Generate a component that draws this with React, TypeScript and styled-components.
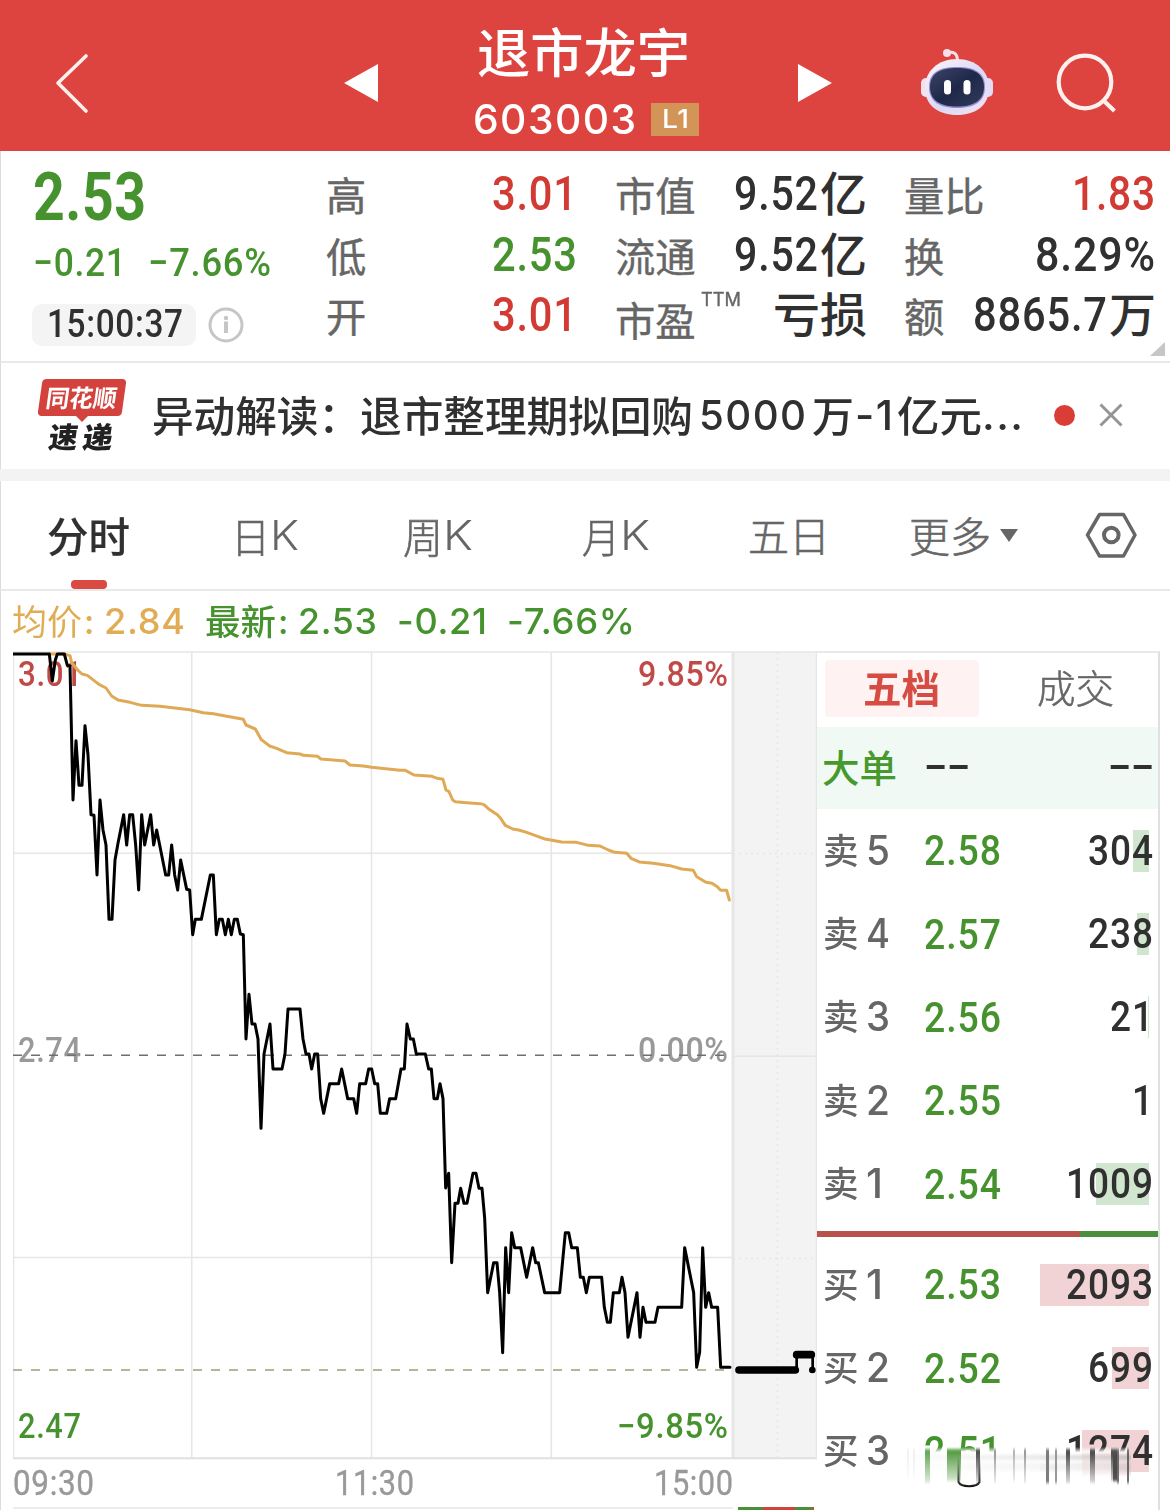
import React, { useLayoutEffect, useRef, useState } from 'react';
import styled, { createGlobalStyle } from 'styled-components';

const DIN = 'Roboto, "Noto Sans CJK SC", sans-serif';
const SF = 'Inter, "Noto Sans CJK SC", sans-serif';
const CJK = '"Noto Sans CJK SC", sans-serif';

const RED = '#d13b33';
const GREEN = '#46922f';
const INK = '#303030';
const GREY = '#666666';
const LINE = '#e9e9e9';

const Global = createGlobalStyle`
  * { box-sizing: border-box; }
  html, body { margin: 0; padding: 0; background: #fff; }
  svg { display: block; }
`;

/* Text squeezed or stretched to an exact advance width. */
const FitBox = styled.span<{ $w: number }>`
  display: inline-block;
  flex: none;
  width: ${(p) => p.$w}px;
  white-space: pre;
  text-align: left;
`;
const FitText = styled.span`
  display: inline-block;
  transform-origin: 0 50%;
`;
function Fit({ w, children }: { w: number; children: React.ReactNode }) {
  const ref = useRef<HTMLSpanElement>(null);
  const [scale, setScale] = useState(1);
  useLayoutEffect(() => {
    if (ref.current && ref.current.offsetWidth) {
      const cs = getComputedStyle(ref.current);
      const width = parseFloat(cs.width) || ref.current.offsetWidth;
      const trailing = parseFloat(cs.letterSpacing) || 0;
      setScale(w / (width - trailing));
    }
  }, [w]);
  return (
    <FitBox $w={w}>
      <FitText ref={ref} style={{ transform: `scaleX(${scale})` }}>{children}</FitText>
    </FitBox>
  );
}

const Screen = styled.div`
  width: 1170px;
  height: 1510px;
  overflow: hidden;
  background: #fff;
  display: flex;
  flex-direction: column;
`;

/* ---------- header ---------- */
const Header = styled.header`
  height: 151px;
  flex: none;
  background: #dd443f;
  display: grid;
  grid-template-columns: 344px 34px 420px 34px 88px 112px 100px;
`;
const HeadCell = styled.div<{ $left?: number; $top: number }>`
  padding: ${(p) => p.$top}px 0 0 ${(p) => p.$left ?? 0}px;
`;
const TitleCell = styled.div`
  display: flex;
  flex-direction: column;
  padding: 22px 0 0 94px;
  color: #fff;
`;
const StockName = styled.div`
  height: 56px;
  padding-left: 5px;
  font: 500 53px/56px ${CJK};
`;
const CodeRow = styled.div`
  display: flex;
  align-items: center;
  gap: 15px;
  height: 48px;
  margin-top: 17px;
  padding-left: 1px;
  font: 500 41.500px/48px ${SF};
  letter-spacing: 0.035em;
`;
const LevelTag = styled.span`
  width: 48px;
  height: 33px;
  display: flex;
  justify-content: center;
  background: #d39557;
  font: 500 26px/32px ${SF};
  letter-spacing: 0.02em;
`;

function Robot() {
  return (
    <svg width="76" height="70" viewBox="919 47 76 70">
      <defs>
        <linearGradient id="shell" x1="0" y1="0" x2="1" y2="1">
          <stop offset="0" stopColor="#fff6f8" />
          <stop offset=".55" stopColor="#dcd8f6" />
          <stop offset="1" stopColor="#f3e4f1" />
        </linearGradient>
        <linearGradient id="visor" x1="0" y1="0" x2="1" y2="1">
          <stop offset="0" stopColor="#3b4468" />
          <stop offset=".5" stopColor="#20284a" />
          <stop offset="1" stopColor="#323b5c" />
        </linearGradient>
      </defs>
      <path d="M947 53 C953 51 957 53 957.5 60" fill="none" stroke="#f6dfe8" strokeWidth="3" />
      <circle cx="947" cy="53" r="4" fill="#f3dfee" />
      <rect x="921" y="78" width="10" height="19" rx="5" fill="#f2e2f0" />
      <rect x="983" y="78" width="10" height="19" rx="5" fill="#e4dcf6" />
      <path d="M957 59 C976 59 989 71 989 88 C989 106 975 115 957 115 C939 115 925 106 925 88 C925 71 938 59 957 59Z" fill="url(#shell)" />
      <path d="M957 67 C974 67 985 72 985 87 C985 102 974 108 957 108 C940 108 929 102 929 87 C929 72 940 67 957 67Z" fill="#8b8fd0" />
      <path d="M957 68 C973 68 984 73 984 87 C984 101 973 106.500 957 106.500 C941 106.500 930 101 930 87 C930 73 941 68 957 68Z" fill="url(#visor)" />
      <rect x="944" y="80" width="7" height="14.500" rx="3.500" fill="#fff" />
      <rect x="963.500" y="80" width="7" height="14.500" rx="3.500" fill="#fff" />
    </svg>
  );
}

/* ---------- quote ---------- */
const Quote = styled.section`
  height: 212px;
  flex: none;
  display: flex;
  border-left: 1px solid #dcdcdc;
  border-bottom: 2px solid ${LINE};
`;
const Summary = styled.div`
  width: 325px;
  padding: 12px 0 0 31px;
`;
const LastPrice = styled.div`
  height: 70px;
  padding-left: 1px;
  color: ${GREEN};
  font: 700 66px/70px ${DIN};
  letter-spacing: 0.01em;
`;
const Change = styled.div`
  display: flex;
  gap: 22px;
  height: 44px;
  margin-top: 7px;
  padding-left: 1px;
  color: ${GREEN};
  font: 500 39.500px/46px ${DIN};
  letter-spacing: 0.02em;
`;
const TimeRow = styled.div`
  display: flex;
  align-items: center;
  gap: 12px;
  margin-top: 20px;
`;
const TimePill = styled.div`
  width: 164px;
  height: 42px;
  padding-left: 15px;
  border-radius: 10px;
  background: #f4f4f4;
  color: ${INK};
  font: 500 38px/41px ${DIN};
  letter-spacing: 0.02em;
`;
const Stats = styled.div`
  display: flex;
  gap: 38px;
  padding-top: 13px;
`;
const StatCol = styled.div`
  width: 251px;
`;
const Stat = styled.div`
  height: 60.500px;
  display: flex;
  align-items: center;
  justify-content: space-between;
`;
const StatLabel = styled.span<{ $drop?: boolean }>`
  display: flex;
  padding-top: ${(p) => (p.$drop ? 8 : 0)}px;
  color: ${GREY};
  font: 400 40.300px/48px ${CJK};
  -webkit-text-stroke: 0.4px ${GREY};
`;
const Ttm = styled.sup`
  margin: -25px 0 0 5px;
  font: 400 19px/60px ${SF};
  vertical-align: baseline;
`;
const StatValue = styled.span<{ $color?: string }>`
  display: flex;
  align-items: center;
  color: ${(p) => p.$color ?? INK};
  font: 500 48px/56px ${DIN};
  letter-spacing: 0.02em;
`;
const Unit = styled.span`
  font: 500 47px/50px ${DIN};
  letter-spacing: 0;
  margin: 2px -1px 0 2px;
`;
const CornerCell = styled.div`
  align-self: flex-end;
  padding: 0 0 5px;
  margin-left: -5px;
`;

/* ---------- notice ---------- */
const Notice = styled.section`
  height: 106px;
  flex: none;
  display: flex;
  border-left: 1px solid #dcdcdc;
`;
const Brand = styled.div`
  width: 151px;
  padding: 16px 0 0 39px;
`;
const BrandTop = styled.div`
  width: 84px;
  height: 37px;
  padding-left: 6px;
  border-radius: 4px;
  background: #d3423c;
  transform: skewX(-8deg);
  color: #fff;
  font: 700 24px/35px ${CJK};
`;
const BrandTip = styled.div`
  width: 0;
  height: 0;
  margin-left: 36px;
  border: solid transparent;
  border-width: 6px 6px 0;
  border-top-color: #d3423c;
`;
const BrandBottom = styled.div`
  height: 30px;
  padding-left: 9px;
  display: flex;
  gap: 5px;
  transform: skewX(-8deg);
  color: #222;
  font: 900 29px/26px ${CJK};
`;
const NoticeText = styled.div`
  width: 903px;
  display: flex;
  padding-top: 26px;
  color: ${INK};
  font: 500 41.600px/50px ${CJK};
`;
const NoticeNum = styled.span<{ $l?: number; $r?: number }>`
  margin: 0 ${(p) => p.$r ?? 0}px 0 ${(p) => p.$l ?? 0}px;
  font: 500 41.500px/52px ${SF};
  letter-spacing: 0.035em;
`;
const Dot = styled.span`
  width: 21px;
  height: 21px;
  margin: 42px 0 0 -1px;
  border-radius: 50%;
  background: #da3d36;
`;
const CloseCell = styled.div`
  padding: 40px 0 0 24px;
`;
const Band = styled.div`
  height: 12px;
  flex: none;
  background: #f3f3f3;
`;

/* ---------- tabs ---------- */
const Tabs = styled.nav`
  height: 110px;
  flex: none;
  display: grid;
  grid-template-columns: 184px 172px 179px 166px 161px 176px 1fr;
  padding-left: 46px;
  border-left: 1px solid #dcdcdc;
  border-bottom: 2px solid ${LINE};
`;
const Tab = styled.div<{ $on?: boolean }>`
  display: flex;
  flex-direction: column;
  padding-top: 27px;
  color: ${(p) => (p.$on ? INK : GREY)};
  font: ${(p) => (p.$on ? 500 : 300)} 41px/52px ${CJK};
  -webkit-text-stroke: ${(p) => (p.$on ? 0.2 : 0.6)}px currentColor;
`;
const TabLine = styled.span`
  display: flex;
  align-items: center;
`;
const Latin = styled.span`
  margin-top: 1px;
  font: 300 41.500px/52px ${SF};
  -webkit-text-stroke: 0;
`;
const Marker = styled.span`
  width: 36px;
  height: 9px;
  margin: 20px 0 0 24px;
  border-radius: 4px;
  background: #d94b42;
`;
const Caret = styled.span`
  margin: 2px 0 0 9px;
  border: solid transparent;
  border-width: 13px 9px 0;
  border-top-color: ${GREY};
`;

/* ---------- legend ---------- */
const Legend = styled.div`
  height: 60px;
  flex: none;
  display: flex;
  padding-left: 11px;
  border-left: 1px solid #dcdcdc;
  font: 500 36px/61px ${SF};
  letter-spacing: 0.02em;
`;
const LegendItem = styled.span<{ $color: string; $gap?: number }>`
  display: flex;
  margin-right: ${(p) => p.$gap ?? 0}px;
  color: ${(p) => p.$color};
`;
const LegendLabel = styled.span<{ $weight: number }>`
  font: ${(p) => p.$weight} 35px/58px ${CJK};
  letter-spacing: 0;
`;
const Colon = styled.span`
  width: 22px;
  font-size: 34px;
  text-indent: 2px;
`;

/* ---------- chart ---------- */
const Main = styled.main`
  flex: 1;
  display: flex;
  border-left: 1px solid #dcdcdc;
`;
const ChartCol = styled.div`
  width: 816px;
  padding-left: 12px;
`;
const Plot = styled.div`
  position: relative;
  height: 809px;
  width: 804px;
`;
const PlotLabel = styled.span<{ $y: number; $color: string; $right?: boolean }>`
  position: absolute;
  top: ${(p) => p.$y}px;
  ${(p) => (p.$right ? 'right: 89px;' : 'left: 5px;')}
  height: 40px;
  color: ${(p) => p.$color};
  font: 500 34.500px/40px ${DIN};
  letter-spacing: 0.02em;
`;
const PlotSvg = styled.svg`
  position: relative;
`;
const Axis = styled.div`
  height: 47px;
  display: flex;
  justify-content: space-between;
  width: 720px;
  color: #999;
  font: 400 34.500px/46px ${DIN};
  letter-spacing: 0.02em;
  -webkit-text-stroke: 0.4px #999;
`;
const Strip = styled.div`
  display: flex;
  height: 3px;
  padding-left: 725px;
  background: linear-gradient(#ececec, #ececec) 0 0 / 720px 2px no-repeat;
`;
const StripPart = styled.span<{ $w: number; $color: string }>`
  width: ${(p) => p.$w}px;
  background: ${(p) => p.$color};
`;

const PRICE =
  '39,42 148,42 157,122 166,60 172,42 193,42 202,76 210,78 219,480 228,302 237,436 246,436 255,257 264,345 273,524 282,526 291,705 300,480 309,570 318,615 327,838 336,838 345,660 354,610 371,524 380,615 389,524 398,524 407,615 416,750 425,524 434,615 452,524 461,615 470,570 497,705 506,705 515,615 524,705 533,750 542,660 560,748 569,750 578,884 586,838 604,838 631,705 640,705 649,884 658,838 667,838 676,884 685,838 694,884 703,838 712,838 721,882 730,884 738,1197 747,1063 756,1152 765,1152 774,1197 783,1465 792,1242 810,1152 819,1287 846,1287 855,1242 864,1107 900,1107 909,1197 918,1242 927,1242 935,1287 944,1242 953,1242 962,1376 971,1420 989,1331 1016,1331 1025,1287 1043,1376 1061,1376 1070,1420 1079,1331 1097,1331 1106,1287 1115,1287 1124,1331 1133,1331 1141,1420 1160,1420 1169,1376 1187,1376 1203,1287 1213,1287 1221,1152 1231,1197 1240,1197 1249,1242 1276,1242 1286,1287 1294,1287 1302,1376 1312,1376 1320,1331 1329,1376 1337,1644 1346,1600 1355,1868 1365,1690 1374,1690 1382,1645 1392,1690 1401,1690 1419,1600 1428,1600 1437,1645 1446,1645 1454,1734 1463,1958 1481,1868 1491,1868 1499,1958 1508,2138 1517,1823 1526,1958 1535,1778 1544,1823 1562,1823 1580,1912 1598,1823 1607,1868 1615,1868 1634,1958 1679,1958 1696,1778 1706,1778 1715,1823 1732,1823 1741,1912 1750,1912 1759,1958 1768,1912 1805,1912 1813,2002 1822,2047 1831,2047 1840,1958 1858,1958 1866,1912 1875,1958 1884,2092 1911,1958 1920,2092 1929,2002 1938,2047 1965,2047 1974,2002 2045,2002 2054,1823 2063,1868 2081,1958 2090,2182 2099,2137 2108,1823 2117,2002 2126,1958 2135,2002 2153,2002 2162,2182 2190,2182';
const AVERAGE =
  '148,42 193,42 210,47 215,68 235,92 246,102 262,106 298,134 318,144 335,168 354,180 390,187 425,196 480,199 569,209 610,218 640,221 730,238 738,255 766,267 784,299 809,318 830,325 860,338 900,342 910,346 952,349 963,357 1035,363 1050,375 1090,378 1115,382 1200,391 1216,391 1242,405 1296,409 1312,415 1329,418 1338,450 1347,455 1358,480 1366,485 1400,488 1440,491 1452,494 1465,506 1492,524 1502,535 1516,556 1538,567 1556,570 1580,577 1615,590 1635,597 1685,606 1730,607 1765,616 1800,618 1825,630 1845,637 1880,640 1893,655 1918,666 1960,670 2010,677 2045,687 2080,691 2090,710 2118,727 2136,730 2152,740 2162,751 2180,751 2188,780';

function Chart() {
  return (
    <Plot>
      <PlotLabel $y={3} $color="#c04a48"><Fit w={64}>3.01</Fit></PlotLabel>
      <PlotLabel $y={3} $color="#c04a48" $right><Fit w={90}>9.85%</Fit></PlotLabel>
      <PlotLabel $y={379} $color="#999"><Fit w={63}>2.74</Fit></PlotLabel>
      <PlotLabel $y={379} $color="#999" $right><Fit w={90}>0.00%</Fit></PlotLabel>
      <PlotLabel $y={755} $color={GREEN}><Fit w={63}>2.47</Fit></PlotLabel>
      <PlotLabel $y={755} $color={GREEN} $right><Fit w={111}>−9.85%</Fit></PlotLabel>
      <PlotSvg width="804" height="809" viewBox="13 651 804 809">
        <rect x="733" y="652" width="83" height="806" fill="#f3f3f3" />
        <g stroke="#e6e6e6" strokeWidth="1.600" fill="none">
          <path d="M13 652H817M13.500 652V1458M191.700 652V1458M371.500 652V1458M551.300 652V1458M13 853.200H733M13 1257.500H733" />
          <path d="M733 652V1458" strokeWidth="3" />
          <path d="M13 1458.300H817" strokeWidth="2" stroke="#e0e0e0" />
          <path d="M733 1056.300H816" />
          <path d="M777.500 652V1458M733 853.500H816M733 1258.500H816" strokeDasharray="2 4" />
          <path d="M816.500 652V1458" />
        </g>
        <path d="M13 1055.300H733" stroke="#6f6f6f" strokeWidth="1.500" strokeDasharray="9 9" />
        <path d="M13 1370H733" stroke="#b5b59a" strokeWidth="1.800" strokeDasharray="9 9" />
        <g transform="translate(0 640) scale(.33333)" fill="none" strokeLinejoin="round" strokeLinecap="round">
          <polyline points={AVERAGE} stroke="#dfa956" strokeWidth="9" />
          <polyline points={PRICE} stroke="#000" strokeWidth="9" />
          <path d="M2390 2185V2145M2438 2145V2190" stroke="#000" strokeWidth="8" />
          <path d="M2217 2190H2386M2390 2144H2434" stroke="#000" strokeWidth="23" />
          <circle cx="2437" cy="2190" r="10" fill="#000" />
        </g>
      </PlotSvg>
    </Plot>
  );
}

/* ---------- order book ---------- */
const Book = styled.aside`
  width: 343px;
  border-top: 2px solid ${LINE};
  border-right: 2px solid #e0e0e0;
  position: relative;
`;
const BookTabs = styled.div`
  height: 74px;
  display: flex;
  gap: 58px;
  padding: 7px 0 0 8px;
`;
const BookTab = styled.div<{ $on?: boolean }>`
  width: ${(p) => (p.$on ? 154 : 80)}px;
  height: 57px;
  padding-left: ${(p) => (p.$on ? 38 : 0)}px;
  border-radius: 4px;
  background: ${(p) => (p.$on ? '#fef2f2' : 'none')};
  color: ${(p) => (p.$on ? '#d64c42' : GREY)};
  font: ${(p) => (p.$on ? 700 : 300)} 38.500px/53px ${CJK};
  -webkit-text-stroke: ${(p) => (p.$on ? 0 : 0.5)}px currentColor;
`;
const BigOrder = styled.div`
  height: 82px;
  display: flex;
  align-items: center;
  padding: 0 4px 0 5px;
  background: #f1f9f5;
`;
const BigLabel = styled.span`
  width: 102px;
  color: #46992c;
  font: 500 37.500px/78px ${CJK};
  margin-top: -4px;
`;
const Dashes = styled.span`
  color: ${INK};
  font: 500 42px/72px ${DIN};
  & + & { margin-left: auto; }
`;
const Rows = styled.div<{ $top?: number }>`
  padding-top: ${(p) => p.$top ?? 0}px;
`;
const Row = styled.div`
  height: 83.400px;
  display: flex;
  align-items: center;
  padding: 0 5px 0 6px;
`;
const Side = styled.span`
  width: 43px;
  color: ${GREY};
  font: 500 35.500px/50px ${CJK};
  margin-top: -4px;
`;
const Level = styled.span`
  width: 58px;
  color: ${GREY};
  font: 500 40.500px/50px ${SF};
`;
const Bid = styled.span`
  color: ${GREEN};
  font: 500 42.500px/51px ${DIN};
  letter-spacing: 0.025em;
`;
const Volume = styled.span<{ $bar: number; $tint: string }>`
  flex: 1;
  height: 42px;
  display: flex;
  justify-content: flex-end;
  background: linear-gradient(${(p) => p.$tint}, ${(p) => p.$tint}) right 4px top 0 / ${(p) => p.$bar}px 42px no-repeat;
  color: ${INK};
  font: 500 42.500px/42px ${DIN};
  letter-spacing: 0.025em;
`;
const Ratio = styled.div`
  height: 6px;
  margin-top: 5px;
  background: linear-gradient(90deg, #b8504c 263px, #4b8e3c 263px);
`;
const Smudge = styled.svg`
  position: absolute;
  left: 78px;
  top: 794px;
`;

const sells: [string, string, string, number][] = [
  ['5', '2.58', '304', 16],
  ['4', '2.57', '238', 12],
  ['3', '2.56', '21', 1],
  ['2', '2.55', '1', 0],
  ['1', '2.54', '1009', 53],
];
const buys: [string, string, string, number][] = [
  ['1', '2.53', '2093', 109],
  ['2', '2.52', '699', 37],
  ['3', '2.51', '1274', 67],
];

/* x, width, height and colour of each vertical streak */
const streaks: [number, number, number, string][] = [
  [30, 5, 34, '#4f9a3c'], [52, 14, 32, '#3f8f2c'], [81, 4, 34, '#333'],
  [99, 2, 34, '#888'], [118, 2, 32, '#aaa'], [129, 2, 34, '#888'], [151, 3, 34, '#666'],
  [160, 2, 34, '#888'], [171, 4, 34, '#333'], [195, 5, 34, '#333'], [216, 6, 32, '#333'],
  [222, 2, 34, '#555'], [232, 2, 34, '#555'], [12, 2, 28, '#eee'], [18, 2, 28, '#eee'],
];

function OrderRow({ side, row, tint }: { side: string; row: [string, string, string, number]; tint: string }) {
  return (
    <Row>
      <Side><Fit w={35.5}>{side}</Fit></Side>
      <Level><Fit w={row[0] === '1' ? 17 : 24}>{row[0]}</Fit></Level>
      <Bid><Fit w={77}>{row[1]}</Fit></Bid>
      <Volume $bar={row[3]} $tint={tint}><Fit w={row[2].length * 22 - 1}>{row[2]}</Fit></Volume>
    </Row>
  );
}

export default function App() {
  return (
    <Screen>
      <Global />
      <Header>
        <HeadCell $left={54} $top={51}>
          <svg width="38" height="64" viewBox="54 51 38 64">
            <path d="M86 56L58 83L86 111" fill="none" stroke="#fff0ee" strokeWidth="3.600" strokeLinecap="round" strokeLinejoin="round" />
          </svg>
        </HeadCell>
        <HeadCell $top={64}>
          <svg width="34" height="38" viewBox="0 0 34 38"><path d="M34 0V38L0 19Z" fill="#fff" /></svg>
        </HeadCell>
        <TitleCell>
          <StockName><Fit w={213}>退市龙宇</Fit></StockName>
          <CodeRow>
            <Fit w={163}>603003</Fit>
            <LevelTag><Fit w={27}>L1</Fit></LevelTag>
          </CodeRow>
        </TitleCell>
        <HeadCell $top={64}>
          <svg width="34" height="38" viewBox="0 0 34 38"><path d="M0 0V38L34 19Z" fill="#fff" /></svg>
        </HeadCell>
        <HeadCell $left={87} $top={47}><Robot /></HeadCell>
        <HeadCell $left={134} $top={50}>
          <svg width="64" height="66" viewBox="1054 50 64 66">
            <g fill="none" stroke="#fff0ee" strokeWidth="4.200">
              <circle cx="1085" cy="82" r="26.300" />
              <path d="M1104 101L1114.500 111" />
            </g>
          </svg>
        </HeadCell>
      </Header>

      <Quote>
        <Summary>
          <LastPrice><Fit w={113}>2.53</Fit></LastPrice>
          <Change>
            <Fit w={93}>−0.21</Fit>
            <Fit w={123}>−7.66%</Fit>
          </Change>
          <TimeRow>
            <TimePill><Fit w={136}>15:00:37</Fit></TimePill>
            <svg width="36" height="36" viewBox="0 0 36 36">
              <circle cx="18" cy="18" r="16" fill="none" stroke="#c6c6c6" strokeWidth="3" />
              <path d="M18 14.500V26" stroke="#c6c6c6" strokeWidth="4" />
              <circle cx="18" cy="11" r="2.200" fill="#c6c6c6" />
            </svg>
          </TimeRow>
        </Summary>
        <Stats>
          <StatCol>
            <Stat><StatLabel>高</StatLabel><StatValue $color={RED}><Fit w={85}>3.01</Fit></StatValue></Stat>
            <Stat><StatLabel>低</StatLabel><StatValue $color={GREEN}><Fit w={85}>2.53</Fit></StatValue></Stat>
            <Stat><StatLabel>开</StatLabel><StatValue $color={RED}><Fit w={85}>3.01</Fit></StatValue></Stat>
          </StatCol>
          <StatCol>
            <Stat><StatLabel>市值</StatLabel><StatValue><Fit w={84}>9.52</Fit><Unit>亿</Unit></StatValue></Stat>
            <Stat><StatLabel>流通</StatLabel><StatValue><Fit w={84}>9.52</Fit><Unit>亿</Unit></StatValue></Stat>
            <Stat>
              <StatLabel $drop>市盈<Ttm><Fit w={40}>TTM</Fit></Ttm></StatLabel>
              <StatValue><Unit>亏损</Unit></StatValue>
            </Stat>
          </StatCol>
          <StatCol>
            <Stat><StatLabel>量比</StatLabel><StatValue $color={RED}><Fit w={83}>1.83</Fit></StatValue></Stat>
            <Stat><StatLabel>换</StatLabel><StatValue><Fit w={120}>8.29%</Fit></StatValue></Stat>
            <Stat><StatLabel>额</StatLabel><StatValue><Fit w={134}>8865.7</Fit><Unit>万</Unit></StatValue></Stat>
          </StatCol>
        </Stats>
        <CornerCell>
          <svg width="15" height="14" viewBox="0 0 15 14"><path d="M15 0V14H0Z" fill="#c6c6c6" /></svg>
        </CornerCell>
      </Quote>

      <Notice>
        <Brand>
          <BrandTop><Fit w={71}>同花顺</Fit></BrandTop>
          <BrandTip />
          <BrandBottom><Fit w={29}>速</Fit><Fit w={30}>递</Fit></BrandBottom>
        </Brand>
        <NoticeText>
          <Fit w={541}>异动解读：退市整理期拟回购</Fit>
          <NoticeNum $l={6} $r={6}><Fit w={107}>5000</Fit></NoticeNum>
          <Fit w={42}>万</Fit>
          <NoticeNum $l={1} $r={4}><Fit w={38}>-1</Fit></NoticeNum>
          <Fit w={85}>亿元</Fit>
          <NoticeNum><Fit w={41}>...</Fit></NoticeNum>
        </NoticeText>
        <Dot />
        <CloseCell>
          <svg width="24" height="24" viewBox="0 0 24 24">
            <path d="M1.500 1.500L22.500 22.500M22.500 1.500L1.500 22.500" stroke="#959595" strokeWidth="3" />
          </svg>
        </CloseCell>
      </Notice>
      <Band />

      <Tabs>
        <Tab $on><Fit w={83}>分时</Fit><Marker /></Tab>
        <Tab><TabLine><Fit w={39}>日</Fit><Latin><Fit w={29}>K</Fit></Latin></TabLine></Tab>
        <Tab><TabLine><Fit w={40}>周</Fit><Latin><Fit w={30}>K</Fit></Latin></TabLine></Tab>
        <Tab><TabLine><Fit w={38}>月</Fit><Latin><Fit w={30}>K</Fit></Latin></TabLine></Tab>
        <Tab><Fit w={82}>五日</Fit></Tab>
        <Tab><TabLine><Fit w={82}>更多</Fit><Caret /></TabLine></Tab>
        <HeadCell $top={30}>
          <svg width="52" height="48" viewBox="1085 511 52 48">
            <g fill="none" stroke={GREY} strokeWidth="3.500" strokeLinejoin="round">
              <path d="M1099.500 514.500H1123.500L1135 535L1123.500 556H1099.500L1087.500 535Z" />
              <circle cx="1111.300" cy="535" r="7.300" strokeWidth="4" />
            </g>
          </svg>
        </HeadCell>
      </Tabs>

      <Legend>
        <LegendItem $color="#e0ad55" $gap={20}>
          <LegendLabel $weight={400}><Fit w={70}>均价</Fit></LegendLabel><Colon>:</Colon><Fit w={81}>2.84</Fit>
        </LegendItem>
        <LegendItem $color={GREEN} $gap={20}>
          <LegendLabel $weight={500}><Fit w={71}>最新</Fit></LegendLabel><Colon>:</Colon><Fit w={79}>2.53</Fit>
        </LegendItem>
        <LegendItem $color={GREEN} $gap={20}><Fit w={90}>-0.21</Fit></LegendItem>
        <LegendItem $color={GREEN}><Fit w={128}>-7.66%</Fit></LegendItem>
      </Legend>

      <Main>
        <ChartCol>
          <Chart />
          <Axis>
            <Fit w={81}>09:30</Fit>
            <Fit w={79}>11:30</Fit>
            <Fit w={79}>15:00</Fit>
          </Axis>
          <Strip>
            <StripPart $w={25} $color="#4b8e3c" />
            <StripPart $w={32} $color="#d0423c" />
            <StripPart $w={17} $color="#4b8e3c" />
            <StripPart $w={2} $color="#b0523c" />
          </Strip>
        </ChartCol>
        <Book>
          <BookTabs>
            <BookTab $on><Fit w={77}>五档</Fit></BookTab>
            <BookTab><Fit w={77}>成交</Fit></BookTab>
          </BookTabs>
          <BigOrder>
            <BigLabel><Fit w={75}>大单</Fit></BigLabel>
            <Dashes><Fit w={46}>––</Fit></Dashes>
            <Dashes><Fit w={46}>––</Fit></Dashes>
          </BigOrder>
          <Rows>
            {sells.map((r) => <OrderRow key={r[1]} side="卖" row={r} tint="#d0e6ce" />)}
          </Rows>
          <Ratio />
          <Rows $top={6}>
            {buys.map((r) => <OrderRow key={r[1]} side="买" row={r} tint="#f2d3d5" />)}
          </Rows>
          <Smudge width="250" height="50" viewBox="0 0 250 50">
            <defs>
              <linearGradient id="fade" x1="0" y1="0" x2="0" y2="1">
                <stop offset="0" stopColor="#fff" stopOpacity="0" />
                <stop offset=".12" stopColor="#fff" stopOpacity="1" />
                <stop offset="1" stopColor="#fff" stopOpacity="1" />
              </linearGradient>
              <linearGradient id="haze" x1="0" y1="0" x2="1" y2="0">
                <stop offset="0" stopColor="#ddd" stopOpacity="0" />
                <stop offset=".6" stopColor="#ddd" stopOpacity=".7" />
                <stop offset="1" stopColor="#c4bcbc" stopOpacity=".9" />
              </linearGradient>
              <linearGradient id="drop" x1="0" y1="0" x2="0" y2="1">
                <stop offset="0" stopColor="#fff" stopOpacity="0" />
                <stop offset="1" stopColor="#fff" stopOpacity=".9" />
              </linearGradient>
              <linearGradient id="rim" gradientUnits="userSpaceOnUse" x1="0" y1="10" x2="0" y2="40">
                <stop offset="0" stopColor="#111" stopOpacity="0" />
                <stop offset="1" stopColor="#111" />
              </linearGradient>
              <filter id="soft"><feGaussianBlur stdDeviation="0.700 1.500" /></filter>
            </defs>
            <rect x="0" y="0" width="234" height="46" fill="url(#fade)" />
            <g filter="url(#soft)">
              <rect x="187" y="6" width="49" height="22" fill="#f2d3d5" opacity=".7" />
              <rect x="0" y="8" width="236" height="5" fill="url(#haze)" />
              <rect x="0" y="16" width="236" height="8" fill="url(#haze)" opacity=".6" />
              {streaks.map(([x, w, h, c], i) => (
                <rect key={i} x={x} y="2" width={w} height={h} fill={c} opacity=".85" />
              ))}
            </g>
            <rect x="0" y="6" width="145" height="34" fill="url(#drop)" />
            <rect x="162" y="6" width="56" height="34" fill="url(#drop)" />
            <path d="M63.500 10V35C66 40.500 82 40.500 84.500 35V10" fill="none" stroke="url(#rim)" strokeWidth="2" />
          </Smudge>
        </Book>
      </Main>
    </Screen>
  );
}
